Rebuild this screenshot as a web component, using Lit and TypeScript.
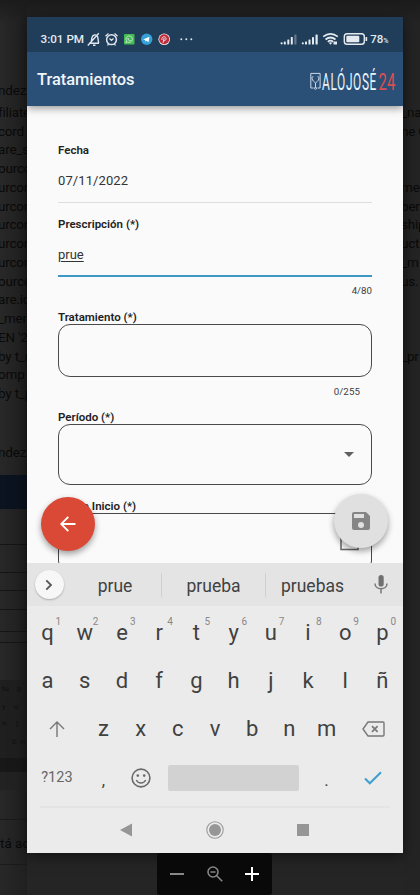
import { LitElement, html, svg, css } from "lit";
import { customElement } from "lit/decorators.js";

const LEFT_LINES = ["ndez", "filiate", "cord", "are_s", "ourco", "urcor", "urcor", "urcor", "urcor", "urcor", "ource", "are.id", "_men", "EN '20", "by t_n", "omp", "by t_p"];
const RIGHT_LINES = ["", "_na", "ne C", "", "", "med", "ber", "ship", "uct", "_m", "us.", "", "", "", "_pr"];

@customElement("page-backdrop")
export class PageBackdrop extends LitElement {
  static styles = css`
    :host { display: flex; justify-content: space-between; height: 895px; background: #252525;
      font: 13.5px/18.75px Roboto, sans-serif; color: #0a0a0a; }
    .col { width: 27px; overflow: hidden; background: linear-gradient(90deg, #282828, #202020); }
    .right { width: 17px; background: #242424; }
    .lines { box-sizing: border-box; padding-top: 80.5px; height: 475px; }
    .row, .late, .mini div, .note { white-space: pre; }
    .row { height: 18.75px; text-indent: -2px; letter-spacing: -.2px; }
    .row:first-child { margin-bottom: 3.5px; }
    .late { margin-top: 40px; text-indent: -2px; letter-spacing: -.2px; }
    .band { height: 34px; background: #0b1320; }
    .rules { display: grid; grid-template-rows: 36px 28px 18px 19px 22px 11px; }
    .rules i { border-bottom: 1px solid #151515; }
    .mini { font-size: 8px; line-height: 17.5px; color: #101010; background: #1f1f1f; height: 78px; margin-top: 37px; padding-left: 2px; box-sizing: border-box; }
    .gap { height: 32px; background: #222; border-top: 14px solid #181818; box-sizing: border-box; }
    .note { margin-top: 29px; line-height: 24px; padding: 11px 0; border: 1px solid #1a1a1a; border-width: 1px 0; height: 22px; }
  `;
  render() {
    return html`
      <div class="col left">
        <div class="lines">
          ${LEFT_LINES.map((t) => html`<div class="row">${t}</div>`)}
          <div class="late">ndez</div>
        </div>
        <div class="band"></div>
        <div class="rules"><i></i><i></i><i></i><i></i><i></i><i></i></div>
        <div class="mini"><div>tu    p</div><div>y    u</div><div>h     j</div><div>     b  n</div></div>
        <div class="gap"></div>
        <div class="note">tá ac</div>
      </div>
      <div class="col right">
        <div class="lines">${RIGHT_LINES.map((t) => html`<div class="row">${t}</div>`)}</div>
      </div>`;
  }
}

const bars = (faded: boolean) => svg`
  <circle cx="1.3" cy="10.8" r="1.1"/><rect x="3.5" y="9" width="2" height="3" rx=".6"/>
  <rect x="7" y="7" width="2" height="5" rx=".6"/><rect x="10.5" y="4.5" width="2" height="7.5" rx=".6"/>
  <rect x="14" y="2" width="2.2" height="10" rx=".6" opacity=${faded ? 0.35 : 1}/>`;

@customElement("phone-header")
export class PhoneHeader extends LitElement {
  static styles = css`
    :host { display: block; position: relative; z-index: 1; color: #e4eaf1; font-family: Roboto, sans-serif;
      box-shadow: 0 2px 8px rgba(0, 0, 0, .42); }
    .status { height: 35px; background: #203d59; display: flex; align-items: center; padding: 9px 14.5px 0 13.5px; box-sizing: border-box; }
    .clock { font-size: 11.7px; font-weight: 500; width: 46px; white-space: nowrap; }
    svg { display: block; flex: none; }
    .icons { display: flex; flex: 1; align-items: center; }
    .pct { font-size: 11.5px; font-weight: 500; margin-left: 2px; white-space: nowrap; }
    .pct small { font-size: 7px; }
    .bar { height: 54px; background: #2b5077; display: flex; align-items: center; justify-content: space-between; padding: 0 7px 0 10px; }
    h1 { margin: 0; font-size: 16.4px; font-weight: 500; color: #f0f5fa; white-space: nowrap; }
    .thin { font-family: Roboto, sans-serif; font-weight: 400; font-size: 23px; }
  `;
  render() {
    return html`
      <div class="status">
        <div class="clock">3:01 PM</div>
        <div class="icons">
          <svg width="108" height="16" viewBox="87 31 108 16" fill="none" stroke="#e0e7ee" stroke-width="1.3">
            <path d="M89 43.200h10M90.500 43c1.400-1.600 1-3.500 1.400-5.200.5-3 4-4 5.600-1.300 1 1.700.1 4.500 1.400 6.500M93 45.300h2.500M87.800 45.500 98.800 33.300" stroke-width="1.400"/>
            <circle cx="111.500" cy="39.700" r="4.900" stroke-width="1.500"/><path d="m105.500 36.200 3-2.700m9 2.700-3-2.700M109.500 38.600l2 1.800 2-1.800M108.500 44l-1 1.500m7-1.500 1 1.500"/>
            <g stroke="none"><rect x="124" y="34" width="10.500" height="10.500" rx=".7" fill="#42be50"/>
            <circle cx="146.700" cy="39.300" r="5.700" fill="#36a0d7"/><path d="m143 39.400 6.500-2.700-1 5.500-2-1.400-1 1-.3-1.900z" fill="#fff"/>
            <circle cx="164.200" cy="39.300" r="5.800" fill="#edf0f3"/><circle cx="164.200" cy="39.300" r="5" fill="#c22c38"/>
            <g fill="#dce6ef"><circle cx="181.300" cy="39.300" r="1"/><circle cx="186.300" cy="39.300" r="1"/><circle cx="191.300" cy="39.300" r="1"/></g></g>
            <path d="m125.800 42.700.6-2a3.200 3.200 0 1 1 1.300 1.300z" stroke-width=".8"/><path d="M128 38c0 2 1 2.700 2.700 2.700" stroke-width="1"/>
            <path d="M162.100 40c-1.500-3.300 3.700-4.500 4-1.500.1 2-2 3-2.700 1.300m.8-1.800-1.100 4.800" stroke-width="1"/>
          </svg>
        </div>
        <svg width="88" height="14" viewBox="280 32.500 88 14" fill="#e4eaf0">
          <g transform="translate(280.300 33)">${bars(true)}</g><g transform="translate(301.500 33)">${bars(false)}</g>
          <g fill="none" stroke="#e4eaf0" stroke-width="1.700"><path d="M323.200 37.200q7.300-5.600 14.600 0M325.500 40q5-4 10 0M327.800 42.300q2.700-2.200 5.400 0"/>
          <rect x="344.300" y="34.300" width="20" height="10.400" rx="2.800" stroke-width="1.400"/></g>
          <path d="m328.800 43.300 1.700 2 1.700-2q-1.700-1.200-3.400 0zM333.500 42h3.500v3h-3.500z"/>
          <rect x="346.300" y="36.300" width="13" height="6.400" rx="1"/><rect x="365.500" y="37.500" width="1.700" height="4" rx=".6"/>
        </svg>
        <div class="pct">78<small>%</small></div>
      </div>
      <div class="bar">
        <h1>Tratamientos</h1>
        <svg width="87" height="30" viewBox="309 64 87 30" fill="none" stroke="#dce9f3" stroke-width=".9">
          <path d="M313.500 88h-2.700V73.400h9.300V88h-2.600"/><path d="M313.300 76.500c-2 0-1.500 3.500.5 5l1.700 1.500 1.700-1.500c2-1.500 2.400-5 .4-5M315.500 83v4.500"/><circle cx="315.500" cy="88.300" r="1"/>
          <text class="thin" transform="translate(322 89.500) scale(.55 1)" textLength="100" lengthAdjust="spacingAndGlyphs" letter-spacing="1.2" fill="#e9f3fa" stroke="none">ALÓJOSÉ</text>
          <text class="thin" transform="translate(378.600 89.500) scale(.64 1)" textLength="26" lengthAdjust="spacingAndGlyphs" fill="#dc4e52" stroke="none">24</text>
        </svg>
      </div>`;
  }
}

@customElement("treatment-form")
export class TreatmentForm extends LitElement {
  static styles = css`
    :host { display: block; position: relative; height: 457px; overflow: hidden; background: #fafafa; font-family: Roboto, sans-serif; color: #222; }
    .fields { padding: 37px 31px 0 31px; }
    label { display: block; font-size: 11.5px; line-height: 14px; font-weight: 600; white-space: nowrap; }
    .value { font-size: 13px; color: #333; box-sizing: border-box; }
    .date { height: 46px; padding-top: 15px; line-height: 18px; border-bottom: 1px solid #dedede; margin-bottom: 14px; letter-spacing: .1px; }
    .name { height: 46px; padding-top: 15px; line-height: 18px; border-bottom: 2px solid #3e97c4; }
    .name span { text-decoration: underline; text-underline-offset: 2px; }
    .count { font-size: 9.7px; line-height: 12px; text-align: right; color: #3c3c3c; }
    .c1 { padding-top: 8px; margin-bottom: 13px; }
    .c2 { padding: 9px 12px 0 0; margin-bottom: 12px; letter-spacing: .1px; }
    .box { box-sizing: border-box; border: 1px solid #4a4a4a; border-radius: 12px; }
    .area { height: 53px; }
    .select { height: 61px; margin: 0 0 14px; display: flex; align-items: center; justify-content: flex-end; padding-right: 17px; }
    .day { height: 60px; display: flex; justify-content: flex-end; padding: 19px 12px 0 0; }
    .fab { position: absolute; width: 54px; height: 54px; border-radius: 50%; display: grid; place-items: center; box-shadow: 0 3px 6px rgba(0, 0, 0, .38); }
    .back { left: 14px; top: 391px; background: #da4836; }
    .save { right: 15px; top: 388px; background: #e0e0e0; }
  `;
  render() {
    return html`
      <div class="fields">
        <label>Fecha</label>
        <div class="value date">07/11/2022</div>
        <label>Prescripción (*)</label>
        <div class="value name"><span>prue</span></div>
        <div class="count c1">4/80</div>
        <label>Tratamiento (*)</label>
        <div class="box area"></div>
        <div class="count c2">0/255</div>
        <label>Período (*)</label>
        <div class="box select"><svg width="10" height="5" viewBox="0 0 10 5"><path d="M0 0h10L5 5z" fill="#606060"/></svg></div>
        <label>Fecha Inicio (*)</label>
        <div class="box day"><svg width="19" height="18" viewBox="0 0 19 18"><path d="M1 1h17v15.500H1z" fill="none" stroke="#666" stroke-width="1.500"/></svg></div>
      </div>
      <div class="fab back"><svg width="16" height="16" viewBox="0 0 16 16" fill="none" stroke="#fff" stroke-width="1.800"><path d="M15.500 8H1.500M8.300.9 1.200 8l7.100 7.100"/></svg></div>
      <div class="fab save"><svg width="18" height="18" viewBox="3 3 18 18" fill="#858585"><path d="M17 3H5a2 2 0 0 0-2 2v14a2 2 0 0 0 2 2h14a2 2 0 0 0 2-2V7zm-5 16a3 3 0 1 1 0-6 3 3 0 0 1 0 6zm3-10H5V5h10z"/></svg></div>`;
  }
}

@customElement("phone-keyboard")
export class PhoneKeyboard extends LitElement {
  static styles = css`
    :host { display: block; height: 290px; background: #ebebeb; font-family: Roboto, sans-serif; color: #414141; }
    svg { display: block; }
    .suggest { height: 43px; background: #e4e4e4; display: grid; grid-template-columns: 44px 91px 104px 93px 44px; align-items: center; justify-items: center; font-size: 17.5px; }
    .word { width: 100%; height: 24px; line-height: 26px; text-align: center; border-right: 1px solid #d0d0d0; box-sizing: border-box; }
    .word:nth-child(2) { padding-right: 2px; }
    .last { border: 0; }
    .more { width: 29px; height: 29px; border-radius: 50%; background: #f7f7f7; display: grid; place-items: center; box-shadow: 0 1px 2px rgba(0, 0, 0, .25); }
    .keys { padding: 3px 2px 0; }
    .row { height: 48.200px; display: grid; grid-template-columns: repeat(20, 1fr); align-items: center; justify-items: center; }
    .key { grid-column: span 2; position: relative; font-size: 22px; line-height: 26px; }
    .key sup { position: absolute; left: 50%; margin-left: 8px; top: -3px; font-size: 10px; line-height: 10px; color: #888; }
    .wide { grid-column: span 3; }
    .space { grid-column: span 8; justify-self: stretch; margin: 0 9px; height: 26px; background: #d2d2d2; border-radius: 2px; }
    .num { font-size: 14.500px; color: #666; }
    .punct { font-size: 17px; padding-top: 5px; }
    .nav { margin: 4.500px 13px 0; border-top: 2px solid #e4e4e4; height: 44px; display: grid; grid-template-columns: 88px 89px 87px; justify-content: center; align-items: center; justify-items: center; padding-right: 2px; }
  `;
  render() {
    const key = (k: string, n?: number) => html`<div class="key">${k}${n === undefined ? "" : html`<sup>${n}</sup>`}</div>`;
    return html`
      <div class="suggest">
        <div class="more"><svg width="8" height="12" viewBox="0 0 8 12"><path d="m1.300 1.300 4.700 4.700-4.700 4.700" fill="none" stroke="#555" stroke-width="1.800"/></svg></div>
        <div class="word">prue</div><div class="word">prueba</div><div class="word last">pruebas</div>
        <svg width="14" height="19" viewBox="0 0 14 19"><rect x="4.500" y="0" width="5.200" height="11.500" rx="2.600" fill="#707070"/><path d="M1 8.500c0 7 12 7 12 0M7 14v4.500" fill="none" stroke="#777" stroke-width="1.500"/></svg>
      </div>
      <div class="keys">
        <div class="row">${[..."qwertyuiop"].map((k, i) => key(k, (i + 1) % 10))}</div>
        <div class="row">${[..."asdfghjklñ"].map((k) => key(k))}</div>
        <div class="row">
          <svg class="wide" width="16" height="16" viewBox="0 0 16 16" fill="none" stroke="#777" stroke-width="1.400"><path d="M8 16V1M1 8l7-7 7 7"/></svg>
          ${[..."zxcvbnm"].map((k) => key(k))}
          <svg class="wide" width="23" height="16" viewBox="0 0 23 16" fill="none" stroke="#777" stroke-width="1.400"><path d="M6 1h15q1 0 1 1v12q0 1-1 1H6L1 8z"/><path d="m10 5.200 5.600 5.600m0-5.600L10 10.800" stroke-width="1.700"/></svg>
        </div>
        <div class="row">
          <div class="wide num">?123</div><div class="key punct">,</div>
          <svg class="key" width="20" height="20" viewBox="0 0 20 20" fill="none" stroke="#6a6a6a" stroke-width="1.600"><circle cx="10" cy="10" r="8.900"/><path d="M5.300 12c2 4 7.400 4 9.400 0" stroke-width="1.400"/><g fill="#6a6a6a" stroke="none"><circle cx="6.800" cy="7.600" r="1.300"/><circle cx="13.200" cy="7.600" r="1.300"/></g></svg>
          <div class="space"></div><div class="key punct">.</div>
          <svg class="wide" width="18" height="14" viewBox="0 0 18 14"><path d="m1 7.500 4.800 4.800L17 1.200" fill="none" stroke="#3d9ed0" stroke-width="2"/></svg>
        </div>
      </div>
      <div class="nav">
        <svg width="12" height="14" viewBox="0 0 12 14"><path d="M12 .5v13L0 7z" fill="#969696"/></svg>
        <svg width="18" height="18" viewBox="0 0 18 18"><circle cx="9" cy="9" r="8.200" fill="none" stroke="#999" stroke-width="1.100"/><circle cx="9" cy="9" r="6" fill="#969696"/></svg>
        <svg width="12" height="12" viewBox="0 0 12 12"><path d="M0 0h12v12H0z" fill="#969696"/></svg>
      </div>`;
  }
}

@customElement("app-root")
export class AppRoot extends LitElement {
  static styles = css`
    :host { display: block; position: relative; width: 420px; height: 895px; overflow: hidden; background: #252525; }
    .phone { position: absolute; left: 27px; top: 17px; width: 376px; height: 836px; overflow: hidden; }
    .shade { position: absolute; left: 27px; top: 17px; width: 376px; height: 836px; box-shadow: 0 3px 14px rgba(0, 0, 0, .55); }
    .zoom { position: absolute; left: 157px; top: 853px; width: 115px; height: 42px; background: #090909; border-radius: 3px; display: grid; grid-template-columns: 40px 35px 40px; place-items: center; }
    .top { position: absolute; left: 0; top: 0; width: 420px; height: 24px; background: linear-gradient(#1b1b1b, rgba(30, 30, 30, 0)); }
  `;
  render() {
    return html`
      <page-backdrop></page-backdrop>
      <div class="top"></div>
      <div class="shade"></div>
      <div class="zoom">
        <svg width="14" height="14" viewBox="0 0 14 14"><path d="M0 7h14" stroke="#888" stroke-width="2"/></svg>
        <svg width="16" height="16" viewBox="0 0 16 16" fill="none" stroke="#858585" stroke-width="1.600"><circle cx="6" cy="6" r="5"/><path d="m9.700 9.700 5.500 5.500M3.500 6h5"/></svg>
        <svg width="14" height="14" viewBox="0 0 14 14"><path d="M0 7h14M7 0v14" stroke="#fff" stroke-width="2"/></svg>
      </div>
      <div class="phone">
        <phone-header></phone-header>
        <treatment-form></treatment-form>
        <phone-keyboard></phone-keyboard>
      </div>`;
  }
}
